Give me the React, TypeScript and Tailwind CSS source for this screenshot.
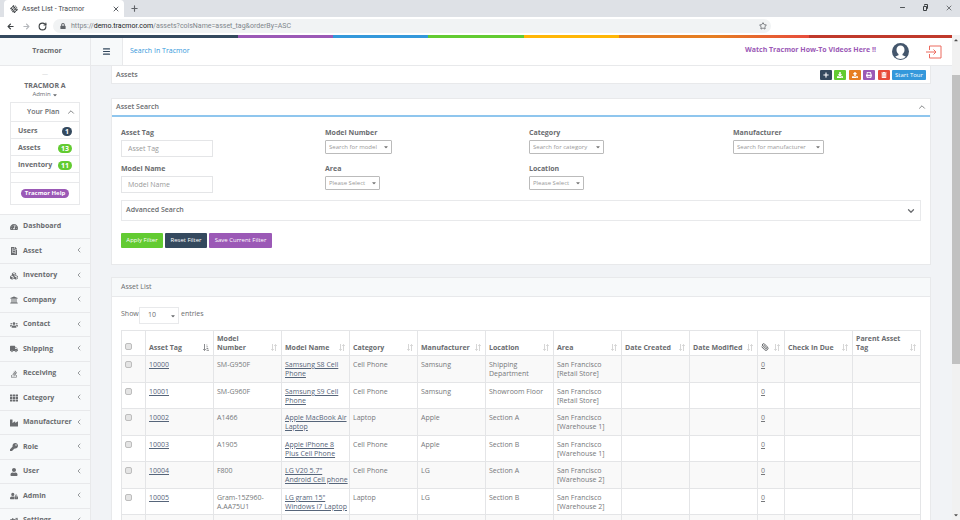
import type { ReactNode } from "react";
import {
  FaArrowLeft,
  FaArrowRight,
  FaCaretDown,
  FaCaretUp,
  FaCogs,
  FaCubes,
  FaDownload,
  FaFileInvoice,
  FaIndustry,
  FaKey,
  FaLock,
  FaPlus,
  FaPrint,
  FaStackOverflow,
  FaTachometerAlt,
  FaTh,
  FaTrashAlt,
  FaTruck,
  FaUniversity,
  FaUpload,
  FaUser,
  FaUserLock,
  FaUsers,
} from "react-icons/fa";
import {
  ChevronDown,
  ChevronLeft,
  ChevronUp,
  Menu,
  Minus,
  Paperclip,
  Plus,
  RotateCw,
  Star,
  X,
} from "lucide-react";

const menu = [
  { label: "Dashboard", icon: FaTachometerAlt, leaf: true },
  { label: "Asset", icon: FaFileInvoice },
  { label: "Inventory", icon: FaCubes },
  { label: "Company", icon: FaUniversity },
  { label: "Contact", icon: FaUsers },
  { label: "Shipping", icon: FaTruck },
  { label: "Receiving", icon: FaStackOverflow },
  { label: "Category", icon: FaTh },
  { label: "Manufacturer", icon: FaIndustry },
  { label: "Role", icon: FaKey },
  { label: "User", icon: FaUser },
  { label: "Admin", icon: FaUserLock },
  { label: "Settings", icon: FaCogs },
];

const plan = [
  { label: "Users", count: 1, color: "bg-[#34495e]" },
  { label: "Assets", count: 13, color: "bg-[#62cb31]" },
  { label: "Inventory", count: 11, color: "bg-[#62cb31]" },
];

const actions = [
  { label: "Add", icon: FaPlus, color: "bg-[#34495e]" },
  { label: "Download", icon: FaDownload, color: "bg-[#62cb31]" },
  { label: "Upload", icon: FaUpload, color: "bg-[#e67e22]" },
  { label: "Print", icon: FaPrint, color: "bg-[#9b59b6]" },
  { label: "Delete", icon: FaTrashAlt, color: "bg-[#e74c3c]" },
];

const columns = [
  "Asset Tag",
  "Model\nNumber",
  "Model Name",
  "Category",
  "Manufacturer",
  "Location",
  "Area",
  "Date Created",
  "Date Modified",
  "Attachments",
  "Check In Due",
  "Parent Asset\nTag",
];

const assets = [
  ["10000", "SM-G950F", "Samsung S8 Cell\nPhone", "Cell Phone", "Samsung", "Shipping\nDepartment", "San Francisco\n[Retail Store]"],
  ["10001", "SM-G960F", "Samsung S9 Cell\nPhone", "Cell Phone", "Samsung", "Showroom Floor", "San Francisco\n[Retail Store]"],
  ["10002", "A1466", "Apple MacBook Air\nLaptop", "Laptop", "Apple", "Section A", "San Francisco\n[Warehouse 1]"],
  ["10003", "A1905", "Apple iPhone 8\nPlus Cell Phone", "Cell Phone", "Apple", "Section B", "San Francisco\n[Warehouse 1]"],
  ["10004", "F800", "LG V20 5.7\"\nAndroid Cell phone", "Cell Phone", "LG", "Section A", "San Francisco\n[Warehouse 2]"],
  ["10005", "Gram-15Z960-\nA.AA75U1", "LG gram 15\"\nWindows i7 Laptop", "Laptop", "LG", "Section B", "San Francisco\n[Warehouse 2]"],
];

function BrowserChrome() {
  return (
    <div className="shrink-0 bg-[#dee1e6] font-[Roboto,sans-serif] text-[#5f6368]">
      <div className="flex h-[17px] items-center">
        <div className="ml-1 flex h-full w-[120px] items-center rounded-t bg-white pr-1 pl-1.5">
          <svg viewBox="0 0 16 16" className="size-2 text-[#3c4043]" aria-hidden="true">
            <g stroke="currentColor" strokeWidth="2.6">
              <path d="M1 8l7-7M3 11l9-9M5 14l9-9M8 15.5l7-7" strokeDasharray="4.6 1" />
            </g>
          </svg>
          <span className="ml-1 flex-1 text-[7px] leading-[10px] text-[#45494d]">Asset List - Tracmor</span>
          <button type="button" aria-label="Close tab">
            <X className="size-2" strokeWidth={3} />
          </button>
        </div>
        <button type="button" aria-label="New tab" className="ml-1.5">
          <Plus className="size-[9px]" strokeWidth={3} />
        </button>
        <div className="ml-auto flex items-center gap-4 pr-[7px] pb-0.5 text-[#3c4043]">
          <button type="button" aria-label="Minimize">
            <Minus className="size-[7px]" strokeWidth={3} />
          </button>
          <button type="button" aria-label="Restore">
            <svg viewBox="0 0 7 7" className="size-[7px]" fill="none" stroke="currentColor">
              <path d="M1.5 2.5h3v4h-3zM2.5 1.5v-1h3v4h-1" />
            </svg>
          </button>
          <button type="button" aria-label="Close">
            <X className="size-2" strokeWidth={2} />
          </button>
        </div>
      </div>
      <div className="flex h-[18px] items-center bg-white pl-[7px]">
        <button type="button" aria-label="Back" className="text-[#3c4043]">
          <FaArrowLeft className="size-[7px]" />
        </button>
        <button type="button" aria-label="Forward" className="ml-[9px] text-[#b4b7bb]">
          <FaArrowRight className="size-[7px]" />
        </button>
        <button type="button" aria-label="Reload" className="ml-2 text-[#3c4043]">
          <RotateCw className="size-[9px]" strokeWidth={3} />
        </button>
        <div className="mr-[189px] ml-1.5 flex h-3.5 flex-1 items-center rounded-full bg-[#f1f3f4] pr-1 pl-[7px]">
          <FaLock className="size-1.5" />
          <span className="ml-[5px] flex-1 text-[7px] leading-[10px] text-[#80868b]">
            https://<span className="text-[#202124]">demo.tracmor.com</span>/assets?colsName=asset_tag&amp;orderBy=ASC
          </span>
          <button type="button" aria-label="Bookmark">
            <Star className="size-2" strokeWidth={2.5} />
          </button>
        </div>
      </div>
    </div>
  );
}

function TopBar() {
  return (
    <header className="flex h-7 shrink-0 border-b border-[#e8e9eb] bg-white">
      <div className="flex w-[91px] items-center justify-center border-r border-[#e8e9eb] bg-[#f7f9fa] pl-1 text-[7px] font-bold">
        <span>Tracmor</span>
      </div>
      <button
        type="button"
        aria-label="Toggle menu"
        className="flex w-8 items-center justify-center border-r border-[#e8e9eb] bg-[#f7f9fa] text-[#34495e]"
      >
        <Menu className="size-[9px]" strokeWidth={3} />
      </button>
      <input
        aria-label="Search"
        placeholder="Search In Tracmor"
        className="w-40 pl-[7px] text-[7px] outline-none placeholder:text-[#3498db] placeholder:opacity-100"
      />
      <div className="ml-auto flex items-center">
        <a href="#videos" className="pb-[3px] text-[7px] leading-[10px] font-bold text-[#9b59b6]">
          Watch Tracmor How-To Videos Here !!
        </a>
        <a href="#profile" aria-label="Profile" className="ml-4">
          <svg viewBox="0 0 34 34" className="size-[17px]">
            <circle cx="17" cy="17" r="17" fill="#44566c" />
            <path
              fill="#fff"
              d="M17 5c-5 0-8 3.500-8 8.500 0 4 1.500 7 4 8.500v2.500c-2 1-5 1.500-6.500 3a14.500 14.500 0 0 0 21 0c-1.500-1.500-4.500-2-6.500-3V22c2.500-1.500 4-4.500 4-8.500C25 8.500 22 5 17 5z"
            />
          </svg>
        </a>
        <a href="#logout" aria-label="Log out" className="mr-2.5 ml-[17px]">
          <svg viewBox="0 0 32 28" className="h-3.5 w-4" fill="none" stroke="#ec6a5e" strokeWidth="2">
            <path d="M7 10V2h23v24H7v-8M0 14h20M15 9l5 5-5 5" />
          </svg>
        </a>
      </div>
    </header>
  );
}

function Sidebar() {
  return (
    <aside className="w-[91px] shrink-0 overflow-hidden border-r border-[#e8e9eb] bg-[#f7f9fa]">
      <div className="h-[148px] bg-white px-2.5 pt-1">
        <div className="text-center">
          <div className="text-[6px] leading-2 text-[#c8cacc]">—</div>
          <div className="mt-[3px] text-[7px] leading-[10px] font-bold">TRACMOR A</div>
          <button type="button" className="flex w-full items-center justify-center text-[6px] leading-[7px]">
            Admin <FaCaretDown className="ml-px size-1.5" />
          </button>
        </div>
        <div className="mt-1 border border-[#e8e9eb]">
          <div className="flex h-[19px] items-center justify-end border-b border-[#e8e9eb] pr-[3px] text-[7px] font-semibold">
            <h2 className="flex-1 pl-4">Your Plan</h2>
            <ChevronUp className="size-2.5" />
          </div>
          <ul className="text-[7px] font-bold">
            {plan.map((p) => (
              <li
                key={p.label}
                className="flex h-[17px] items-center justify-between border-b border-[#e8e9eb] px-[7px] pt-0.5"
              >
                {p.label}
                <span className={`${p.color} rounded-full px-[3px] text-[7px] leading-[9px] text-white`}>{p.count}</span>
              </li>
            ))}
          </ul>
          <div className="h-2.5 border-b border-[#e8e9eb]" />
          <div className="flex h-[21px] items-center justify-center">
            <a href="#help" className="rounded-full bg-[#9b59b6] px-1 text-[6px] leading-[9px] font-bold text-white">
              Tracmor Help
            </a>
          </div>
        </div>
      </div>
      <nav>
        <ul className="border-t border-[#e8e9eb]">
          {menu.map(({ label, icon: Icon, leaf }) => (
            <li key={label} className="border-b border-[#e8e9eb] odd:h-6 even:h-[25px]">
              <a href="#menu" className="flex h-full items-center pr-[7px] pl-2.5 text-[7px] font-bold">
                <Icon className="size-2" />
                <span className="ml-[5px] flex-1">{label}</span>
                {!leaf && <ChevronLeft className="mb-0.5 size-2" />}
              </a>
            </li>
          ))}
        </ul>
      </nav>
    </aside>
  );
}

function Field({ id, label, children }: { id: string; label: string; children: ReactNode }) {
  return (
    <div className="h-9">
      <label htmlFor={id} className="mb-0.5 block text-[7px] leading-[10px] font-bold">
        {label}
      </label>
      {children}
    </div>
  );
}

function TextField({ id, label }: { id: string; label: string }) {
  return (
    <Field id={id} label={label}>
      <input
        id={id}
        placeholder={label}
        className="block h-[17px] w-[92px] border border-[#e4e5e7] px-1.5 text-[7px] outline-none placeholder:text-[#999]"
      />
    </Field>
  );
}

function SelectField({ id, label, text, width }: { id: string; label: string; text: string; width: string }) {
  return (
    <Field id={id} label={label}>
      <div className={`${width} flex h-3.5 items-center rounded-[1px] border border-[#bbb] pr-0.5 text-[#999]`}>
        <select id={id} className="min-w-0 flex-1 appearance-none pl-[3px] text-[6px] leading-[10px] outline-none">
          <option>{text}</option>
        </select>
        <FaCaretDown className="pointer-events-none size-1.5 shrink-0 text-[#777]" />
      </div>
    </Field>
  );
}

function SearchPanel() {
  return (
    <section className="mt-3.5 border border-[#e8e9eb] bg-white">
      <div className="flex h-[18px] items-center justify-between border-b-2 border-[#8fc6ee] pr-[3px] pl-1">
        <h2 className="text-[7px] font-semibold">Asset Search</h2>
        <button type="button" aria-label="Collapse">
          <ChevronUp className="size-2.5" />
        </button>
      </div>
      <div className="px-[9px] pt-[11px] pb-4">
        <div className="-mr-4 grid grid-cols-4">
          <TextField id="asset-tag" label="Asset Tag" />
          <SelectField id="model-number" label="Model Number" text="Search for model" width="w-[67px]" />
          <SelectField id="category" label="Category" text="Search for category" width="w-[75px]" />
          <SelectField id="manufacturer" label="Manufacturer" text="Search for manufacturer" width="w-[91px]" />
          <TextField id="model-name" label="Model Name" />
          <SelectField id="area" label="Area" text="Please Select" width="w-[55px]" />
          <SelectField id="location" label="Location" text="Please Select" width="w-[55px]" />
        </div>
        <button
          type="button"
          className="flex h-[21px] w-full items-center justify-between border border-[#e8e9eb] px-1 text-[7px] font-semibold"
        >
          Advanced Search
          <ChevronDown className="size-2.5" strokeWidth={3} />
        </button>
        <div className="mt-3 flex gap-0.5 text-[6px] text-white">
          <button type="button" className="h-[15px] w-[42px] rounded-[1px] bg-[#62cb31]">Apply Filter</button>
          <button type="button" className="h-[15px] w-[42px] rounded-[1px] bg-[#34495e]">Reset Filter</button>
          <button type="button" className="h-[15px] w-[63px] rounded-[1px] bg-[#9b59b6]">Save Current Filter</button>
        </div>
      </div>
    </section>
  );
}

function SortIcon({ active }: { active: boolean }) {
  return (
    <svg
      viewBox="0 0 12 14"
      className={active ? "h-[7px] w-1.5 text-[#8a8c8f]" : "h-[7px] w-1.5 text-[#d6d6d6]"}
      fill="none"
      stroke="currentColor"
      strokeWidth="2"
    >
      {active ? (
        <path d="M3 0v13M0.500 10L3 13l2.500-3M7 2h1.500M7 5.500h2.500M7 9h3.500M7 12.500h5" />
      ) : (
        <path d="M3 0v13M0.500 10L3 13l2.500-3M9 14V1M6.500 4L9 1l2.500 3" />
      )}
    </svg>
  );
}

function Check({ label }: { label: string }) {
  return (
    <input
      type="checkbox"
      aria-label={label}
      className="block size-[7px] appearance-none rounded-[2px] border border-[#bdbdbd] bg-[#e4e4e4]"
    />
  );
}

function AssetTable() {
  return (
    <table className="mt-1.5 w-full table-fixed border-collapse text-left text-[7px] leading-[9px] whitespace-pre [&_td]:border [&_td]:border-[#e4e5e7] [&_th]:border [&_th]:border-[#e4e5e7]">
      <colgroup>
        <col className="w-6" />
        {columns.map((c) => (
          <col key={c} className={c === "Attachments" ? "w-[27px]" : ""} />
        ))}
      </colgroup>
      <thead>
        <tr className="align-bottom">
          <th className="pb-[5px] pl-[3px]">
            <Check label="Select all" />
          </th>
          {columns.map((c) => (
            <th key={c} className="py-[3px] pr-1 pl-[3px] font-bold">
              <div className="flex items-end justify-between">
                {c === "Attachments" ? (
                  <Paperclip aria-label={c} className="mb-px size-2 -scale-x-100" strokeWidth={3} />
                ) : (
                  c
                )}
                <span className="-ml-1 pb-px">
                  <SortIcon active={c === "Asset Tag"} />
                </span>
              </div>
            </th>
          ))}
        </tr>
      </thead>
      <tbody className="text-[#76787b]">
        {assets.map((row) => (
          <tr key={row[0]} className="align-top odd:bg-[#f9f9f9] odd:[&>td]:pb-1 even:[&>td]:pb-[3px] [&>td]:pt-1 [&>td]:pl-[3px]">
            <td>
              <div className="pt-px">
                <Check label={`Select ${row[0]}`} />
              </div>
            </td>
            {row.map((cell, i) => (
              <td key={i}>
                {i === 0 || i === 2 ? (
                  <a href="#asset" className="text-[#56657a] underline">
                    {cell}
                  </a>
                ) : (
                  cell
                )}
              </td>
            ))}
            <td />
            <td />
            <td>
              <a href="#files" className="underline">0</a>
            </td>
            <td />
            <td />
          </tr>
        ))}
      </tbody>
      <tfoot>
        <tr className="h-7 bg-[#f9f9f9]">
          <td />
          {columns.map((c) => (
            <td key={c} />
          ))}
        </tr>
      </tfoot>
    </table>
  );
}

function Scrollbar() {
  return (
    <div className="flex w-2 shrink-0 flex-col items-center bg-[#f1f1f1] text-[#505050]" aria-hidden="true">
      <FaCaretUp className="mt-0.5 size-1.5 shrink-0" />
      <div className="mt-8 w-full flex-[288] bg-[#c1c1c1]" />
      <div className="flex-[148]" />
      <FaCaretDown className="mb-0.5 size-1.5 shrink-0" />
    </div>
  );
}

export default function App() {
  return (
    <div className="flex h-screen flex-col overflow-hidden bg-white font-['Open_Sans','Noto_Sans',sans-serif] text-[#6a6c6f]">
      <BrowserChrome />
      <div className="flex min-h-0 flex-1">
        <div className="flex min-w-0 flex-1 flex-col">
          <div className="h-[3px] shrink-0 bg-[linear-gradient(to_right,#34495e_25%,#9b59b6_25%,#9b59b6_35%,#3498db_35%,#3498db_45%,#62cb31_45%,#62cb31_55%,#ffb606_55%,#ffb606_65%,#e67e22_65%,#e67e22_75%,#e74c3c_85%,#c0392b_85%)]" />
          <TopBar />
          <div className="flex min-h-0 flex-1">
            <Sidebar />
            <main className="min-w-0 flex-1 overflow-hidden bg-[#f1f3f6] pr-[21px] pl-5">
              <div className="flex h-[18px] items-center border border-t-0 border-[#e8e9eb] bg-white pr-1 pl-1">
                <h1 className="flex-1 pt-0.5 text-[7px] font-semibold">Assets</h1>
                <div className="flex w-[106px] justify-between text-white">
                  {actions.map(({ label, icon: Icon, color }) => (
                    <button
                      key={label}
                      type="button"
                      aria-label={label}
                      className={`${color} flex h-2.5 w-3 items-center justify-center rounded-[1px]`}
                    >
                      <Icon className="size-1.5" />
                    </button>
                  ))}
                  <button type="button" className="h-2.5 w-[34px] rounded-[1px] bg-[#3498db] text-[6px] leading-[10px]">
                    Start Tour
                  </button>
                </div>
              </div>
              <SearchPanel />
              <section className="mt-3 border border-[#e8e9eb] bg-white">
                <h2 className="flex h-[19px] items-center border-b border-[#e8e9eb] bg-[#f7f9fa] pl-[9px] text-[7px]">
                  Asset List
                </h2>
                <div className="px-[9px] pt-2.5 pb-4">
                  <label className="flex items-center text-[7px]">
                    <span className="w-[18px] pb-0.5">Show</span>
                    <span className="flex h-[17px] w-10 items-center border border-[#e8e9eb] pr-0.5">
                      <select className="flex-1 appearance-none pl-2 text-[7px] outline-none">
                        <option>10</option>
                      </select>
                      <FaCaretDown className="pointer-events-none size-1.5" />
                    </span>
                    <span className="pb-0.5 pl-0.5">entries</span>
                  </label>
                  <AssetTable />
                </div>
              </section>
            </main>
          </div>
        </div>
        <Scrollbar />
      </div>
    </div>
  );
}
